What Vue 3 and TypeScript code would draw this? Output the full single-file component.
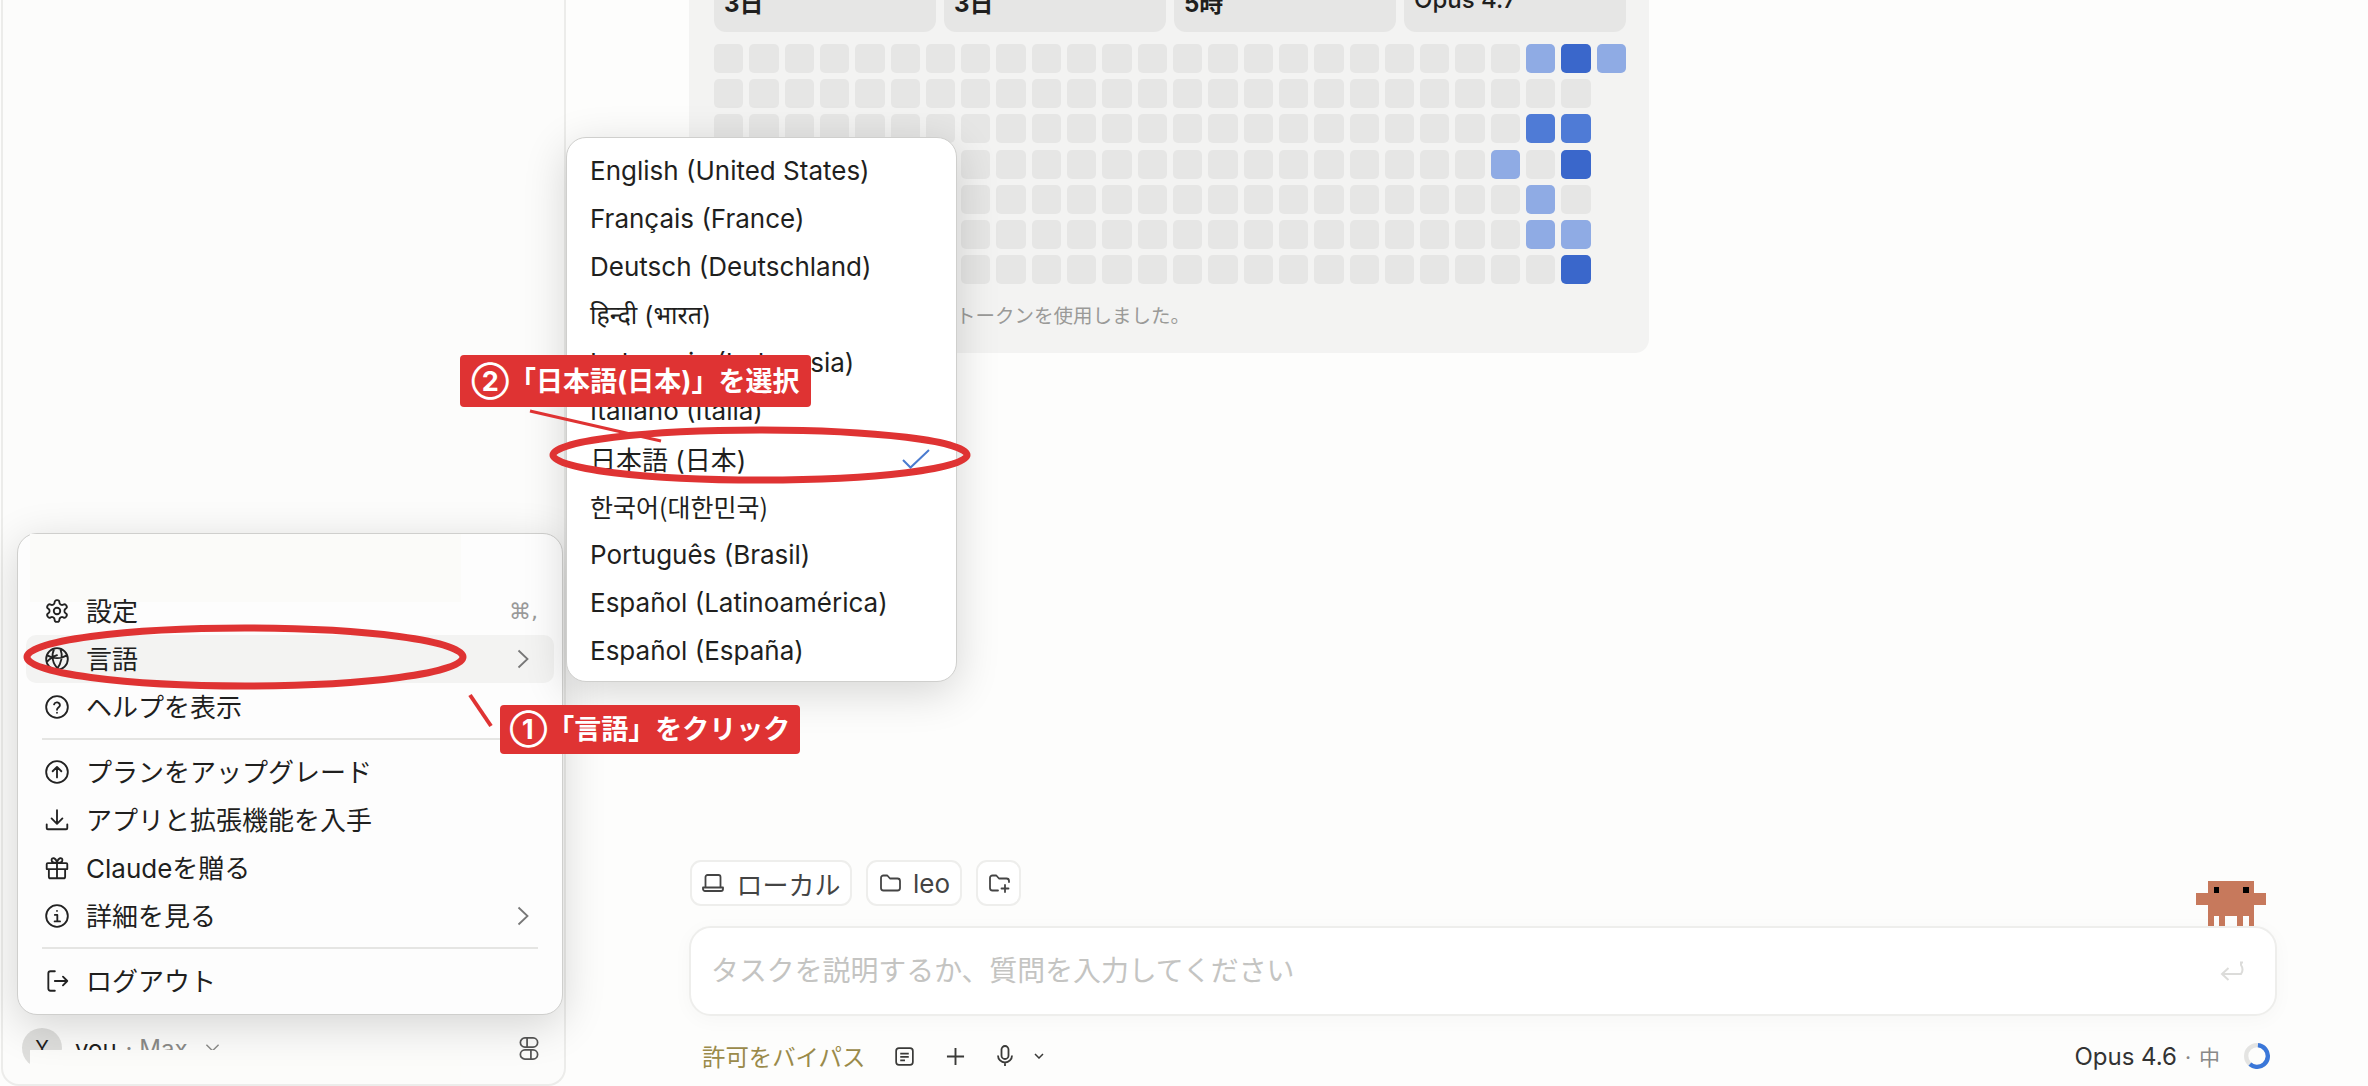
<template>
  <div class="app">
    <aside class="sidebar">
      <div class="user-row">
        <span class="avatar">Y</span>
        <span class="user-name">you</span>
        <span class="user-plan">· Max</span>
        <svg class="user-chevron" viewBox="0 0 16 10"><path d="M1.5 1.5 8 8l6.5-6.5" /></svg>
        <svg class="layout-icon" viewBox="0 0 20 24">
          <rect x="1" y="1" width="18" height="9.5" rx="4.7" />
          <rect x="1" y="13.5" width="18" height="9.5" rx="4.7" />
          <path d="M8 1v9.5M12 13.5V23" />
        </svg>
      </div>
    </aside>

    <main class="content">
      <section class="stats-card">
        <div class="tiles">
          <div v-for="tile in tiles" :key="tile.id" class="tile" :class="{ 'tile-model': tile.model }">{{ tile.label }}</div>
        </div>
        <div class="heatmap">
          <div v-for="(cell, i) in cells" :key="i" class="cell" :class="cell"></div>
        </div>
        <p class="note">トークンを使用しました。</p>
      </section>

      <section class="composer">
        <svg class="mascot" viewBox="0 0 12 8" shape-rendering="crispEdges">
          <path fill="#c7795c" d="M2 0h8v2h2v2h-2v4H9V6H8v2H7V6H5v2H4V6H3v2H2V4H0V2h2z" />
          <path fill="#000" d="M3 1h1v1H3zM8 1h1v1H8z" />
        </svg>
        <div class="chips">
          <div class="chip chip-local">
            <svg class="chip-icon" viewBox="0 0 24 24"><path d="M4.5 16V6a2 2 0 0 1 2-2h11a2 2 0 0 1 2 2v10M2 16.5h20V18a2 2 0 0 1-2 2H4a2 2 0 0 1-2-2z" /></svg>
            <span>ローカル</span>
          </div>
          <div class="chip chip-folder">
            <svg class="chip-icon" viewBox="0 0 24 24"><path d="M3 7a2.5 2.5 0 0 1 2.5-2.5h3.8l2.7 3h7.5A2.5 2.5 0 0 1 22 10v7a2.5 2.5 0 0 1-2.5 2.5h-14A2.5 2.5 0 0 1 3 17z" /></svg>
            <span>leo</span>
          </div>
          <div class="chip chip-add">
            <svg class="chip-icon" viewBox="0 0 24 24"><path d="M11 19.5H5.5A2.5 2.5 0 0 1 3 17V7a2.5 2.5 0 0 1 2.5-2.5h3.8l2.7 3h7.5A2.5 2.5 0 0 1 22 10v1M18 14v7M14.5 17.500h7" /></svg>
          </div>
        </div>
        <div class="prompt">
          <span class="placeholder">タスクを説明するか、質問を入力してください</span>
          <svg class="enter-icon" viewBox="0 0 24 20"><path d="M23 1.500h-2v2.500a8 8 0 0 1 0 9H2M8.500 7 2 13l6.500 6" /></svg>
        </div>
        <div class="toolbar">
          <span class="bypass">許可をバイパス</span>
          <svg class="tool-doc" viewBox="0 0 20 20"><rect x="1.200" y="1.200" width="17.600" height="17.600" rx="3" /><path d="M5.500 7h9M5.500 10.500h9M5.500 14h5" /></svg>
          <svg class="tool-plus" viewBox="0 0 20 20"><path d="M10 1v18M1 10h18" /></svg>
          <svg class="tool-mic" viewBox="0 0 16 22"><rect x="4.500" y="1" width="7" height="13" rx="3.500" /><path d="M1 10.500a7 7 0 0 0 14 0M8 17.500V21" /></svg>
          <svg class="tool-chevron" viewBox="0 0 10 6"><path d="M1 1l4 4 4-4" /></svg>
          <span class="model">Opus 4.6</span>
          <span class="effort"><span class="effort-dot">·</span>中</span>
          <svg class="ring" viewBox="0 0 24 24">
            <circle cx="12" cy="12" r="10" class="ring-track" />
            <circle cx="12" cy="12" r="10" class="ring-value" pathLength="100" stroke-dasharray="60 100" transform="rotate(-85 12 12)" />
          </svg>
        </div>
      </section>
    </main>

    <!-- 上のパッチとポップアップ -->
    <div class="patch-top"></div>
    <div class="patch-bottom"></div>

    <div class="account-menu">
      <div class="menu-patch"></div>
      <template v-for="item in menuItems" :key="item.label">
        <div class="menu-row" :class="{ active: item.active }">
          <svg class="menu-icon" viewBox="0 0 24 24"><path :d="item.icon" /></svg>
          <span class="menu-label">{{ item.label }}</span>
          <span v-if="item.shortcut" class="shortcut">{{ item.shortcut }}</span>
          <svg v-if="item.sub" class="menu-chevron" viewBox="0 0 12 20"><path d="M1.500 1.500 10.500 10l-9 8.500" /></svg>
        </div>
        <hr v-if="item.divider" class="menu-divider" />
      </template>
    </div>

    <div class="lang-menu">
      <div v-for="lang in languages" :key="lang.name" class="lang-row" :class="lang.cls">
        <span>{{ lang.name }}</span>
        <svg v-if="lang.selected" class="check" viewBox="0 0 28 20"><path d="M1 11l7.500 7.500L27 1" /></svg>
      </div>
    </div>

    <svg class="marks" viewBox="0 0 2368 1086">
      <ellipse cx="245" cy="657" rx="218" ry="29" />
      <ellipse cx="760" cy="455" rx="207" ry="25" />
      <path d="M470 695l21 31" stroke-width="4" />
      <path d="M530 411l131 30" stroke-width="3" />
    </svg>
    <div class="callout callout-one">①「言語」をクリック</div>
    <div class="callout callout-two">②「日本語(日本)」を選択</div>
  </div>
</template>

<script setup lang="ts">
interface MenuItem {
  label: string;
  icon: string;
  shortcut?: string;
  sub?: boolean;
  active?: boolean;
  divider?: boolean;
}

const tiles = [
  { id: 1, label: '3日', model: false },
  { id: 2, label: '3日', model: false },
  { id: 3, label: '5時', model: false },
  { id: 4, label: 'Opus 4.7', model: true },
];

// 行ごとの色付きセル [行, 列, 濃さ]
const marked: [number, number, string][] = [
  [0, 23, 'light'],
  [0, 24, 'dark'],
  [0, 25, 'light'],
  [2, 23, 'mid'],
  [2, 24, 'mid'],
  [3, 22, 'light'],
  [3, 24, 'dark'],
  [4, 23, 'light'],
  [5, 23, 'light'],
  [5, 24, 'light'],
  [6, 24, 'dark'],
];

const cells: string[] = [];
for (let row = 0; row < 7; row++) {
  for (let col = 0; col < 26; col++) {
    const hit = marked.find((m) => m[0] === row && m[1] === col);
    if (hit) cells.push(hit[2]);
    else cells.push(col === 25 ? 'none' : 'empty');
  }
}

const circle = 'M22 12a10 10 0 1 1-20 0 10 10 0 0 1 20 0z';

const menuItems: MenuItem[] = [
  {
    label: '設定',
    shortcut: '⌘,',
    icon: 'M12.220 2h-.440a2 2 0 0 0-2 2v.180a2 2 0 0 1-1 1.730l-.430.250a2 2 0 0 1-2 0l-.150-.080a2 2 0 0 0-2.730.730l-.220.380a2 2 0 0 0 .730 2.730l.150.100a2 2 0 0 1 1 1.720v.510a2 2 0 0 1-1 1.740l-.150.090a2 2 0 0 0-.730 2.730l.220.380a2 2 0 0 0 2.730.730l.150-.080a2 2 0 0 1 2 0l.430.250a2 2 0 0 1 1 1.730V20a2 2 0 0 0 2 2h.440a2 2 0 0 0 2-2v-.180a2 2 0 0 1 1-1.730l.430-.250a2 2 0 0 1 2 0l.150.080a2 2 0 0 0 2.730-.730l.220-.390a2 2 0 0 0-.730-2.730l-.150-.080a2 2 0 0 1-1-1.740v-.500a2 2 0 0 1 1-1.740l.150-.090a2 2 0 0 0 .730-2.730l-.220-.380a2 2 0 0 0-2.730-.730l-.150.080a2 2 0 0 1-2 0l-.430-.250a2 2 0 0 1-1-1.730V4a2 2 0 0 0-2-2zM15 12a3 3 0 1 1-6 0 3 3 0 0 1 6 0z',
  },
  {
    label: '言語',
    sub: true,
    active: true,
    icon: circle + 'M3 8.500c5 3.500 13 3.500 18 0M2.500 15c2.500-3 5-5 9.500-6.500M9.500 2.500c-3 6-2 14 4 19M15 2.500c2.500 6 1.500 13-3.500 19.500',
  },
  {
    label: 'ヘルプを表示',
    icon: circle + 'M9.300 9.500a2.800 2.800 0 0 1 5.400.9c0 1.900-2.700 2.300-2.700 4.100M12 17.300v.1',
    divider: true,
  },
  {
    label: 'プランをアップグレード',
    icon: circle + 'M12 17V7.500M8 11.300 12 7.300l4 4',
  },
  {
    label: 'アプリと拡張機能を入手',
    icon: 'M12 3v12M7 10.500l5 5 5-5M2.500 16v3.500a1 1 0 0 0 1 1h17a1 1 0 0 0 1-1V16',
  },
  {
    label: 'Claudeを贈る',
    icon: 'M2.500 8.500a1 1 0 0 1 1-1h17a1 1 0 0 1 1 1V13h-19zM4.500 13v7a1.500 1.500 0 0 0 1.500 1.500h12a1.500 1.500 0 0 0 1.500-1.500v-7M12 7.500v14M12 7.500C9 7.500 7 6.500 7 4.700c0-2.500 4-3 5 2.800 1-5.800 5-5.300 5-2.800 0 1.800-2 2.800-5 2.800z',
  },
  {
    label: '詳細を見る',
    sub: true,
    divider: true,
    icon: circle + 'M10 11h2.300v6M9.800 17h5M12 7.200v.1',
  },
  {
    label: 'ログアウト',
    icon: 'M10 3H6a2 2 0 0 0-2 2v14a2 2 0 0 0 2 2h4M10 12h11.500M17.500 8l4 4-4 4',
  },
];

const languages = [
  { name: 'English (United States)' },
  { name: 'Français (France)' },
  { name: 'Deutsch (Deutschland)' },
  { name: 'हिन्दी (भारत)', cls: 'hi' },
  { name: 'Indonesia (Indonesia)' },
  { name: 'Italiano (Italia)' },
  { name: '日本語 (日本)', selected: true },
  { name: '한국어(대한민국)', cls: 'ko' },
  { name: 'Português (Brasil)' },
  { name: 'Español (Latinoamérica)' },
  { name: 'Español (España)' },
];
</script>

<style>
html,
body {
  margin: 0;
  background: #fdfdfc;
}
</style>

<style scoped>
.app {
  position: relative;
  display: flex;
  width: 2368px;
  height: 1086px;
  overflow: hidden;
  background: #fdfdfc;
  color: #1f1f1e;
  font-family: Inter, 'Noto Sans CJK JP', 'Noto Sans', sans-serif;
}

.sidebar {
  flex: 0 0 auto;
  display: flex;
  flex-direction: column;
  justify-content: flex-end;
  box-sizing: border-box;
  width: 565px;
  margin-left: 1px;
  border: 2px solid #ececea;
  border-top: none;
  border-radius: 0 0 18px 18px;
  background: #fcfcfb;
}

.user-row {
  display: flex;
  align-items: center;
  height: 40px;
  margin-bottom: 16px;
  padding: 0 25px 0 19px;
  font-size: 24px;
}

.avatar {
  display: flex;
  align-items: center;
  justify-content: center;
  width: 40px;
  height: 40px;
  margin-right: 13px;
  border-radius: 50%;
  background: #dededc;
  font-size: 20px;
}

.user-name {
  margin-right: 9px;
}

.user-plan {
  color: #8a8a88;
}

.user-chevron {
  width: 15px;
  height: 10px;
  margin-left: 17px;
  fill: none;
  stroke: #8a8a88;
  stroke-width: 1.500;
}

.layout-icon {
  width: 20px;
  height: 23px;
  margin-left: auto;
  fill: none;
  stroke: #555;
  stroke-width: 1.800;
}

.content {
  flex: 1;
  display: flex;
  flex-direction: column;
  justify-content: space-between;
  padding-left: 123px;
}

.stats-card {
  box-sizing: border-box;
  width: 960px;
  margin-top: -42px;
  padding: 14px 23px 24px 25px;
  border-radius: 14px;
  background: #f3f3f2;
}

.tiles {
  display: grid;
  grid-template-columns: repeat(4, 1fr);
  gap: 8px;
}

.tile {
  box-sizing: border-box;
  height: 60px;
  padding: 17px 0 0 10px;
  border-radius: 12px;
  background: #e6e6e5;
  overflow: hidden;
  font-size: 24px;
  font-weight: 700;
  line-height: 30px;
}

.tile-model {
  padding-top: 13px;
  font-size: 24px;
  font-weight: 500;
}

.heatmap {
  display: grid;
  grid-template-columns: repeat(26, 1fr);
  grid-auto-rows: 29px;
  gap: 6.200px 6px;
  margin-top: 12px;
}

.cell {
  border-radius: 5px;
}

.empty {
  background: #e6e6e5;
}

.light {
  background: #8fabe4;
}

.mid {
  background: #4f7bd6;
}

.dark {
  background: #3a67cb;
}

.note {
  margin: 19px 0 0 242px;
  color: #9a9a98;
  font-size: 19.500px;
  line-height: 26px;
}

.composer {
  position: relative;
  width: 1588px;
  padding-bottom: 10px;
}

.mascot {
  position: absolute;
  top: 21px;
  right: 11px;
  width: 70px;
  height: 47px;
}

.chips {
  display: flex;
  gap: 14px;
  margin: 0 0 20px 1px;
}

.chip {
  display: flex;
  align-items: center;
  justify-content: center;
  box-sizing: border-box;
  height: 46px;
  border: 2px solid #eeeeec;
  border-radius: 11px;
  background: #fff;
  color: #444;
  font-size: 26px;
  gap: 11px;
}

.chip-local {
  width: 162px;
}

.chip-folder {
  width: 96px;
}

.chip-add {
  width: 45px;
}

.chip-icon {
  width: 24px;
  height: 24px;
  fill: none;
  stroke: #444;
  stroke-width: 1.800;
  stroke-linejoin: round;
  stroke-linecap: round;
}

.prompt {
  position: relative;
  display: flex;
  align-items: center;
  justify-content: space-between;
  box-sizing: border-box;
  height: 90px;
  padding: 0 31px 0 20px;
  border: 2px solid #eeeeec;
  border-radius: 22px;
  background: #fff;
  box-shadow: 0 4px 20px rgba(0, 0, 0, 0.03);
}

.placeholder {
  color: #c4c4c2;
  font-size: 27.900px;
  line-height: 34px;
}

.enter-icon {
  width: 24px;
  height: 20px;
  fill: none;
  stroke: #dcdcda;
  stroke-width: 2;
}

.toolbar {
  display: flex;
  align-items: center;
  height: 40px;
  margin-top: 20px;
  padding: 0 7px 0 13px;
}

.bypass {
  margin-right: 30px;
  color: #9a8a4a;
  font-size: 23.400px;
}

.toolbar svg {
  fill: none;
  stroke: #3a3a38;
  flex: 0 0 auto;
}

.tool-doc {
  width: 19px;
  height: 19px;
  stroke-width: 1.800;
}

.tool-plus {
  width: 19px;
  height: 19px;
  margin-left: 32px;
  stroke-width: 2;
}

.tool-mic {
  width: 16px;
  height: 22px;
  margin-left: 32px;
  stroke-width: 1.800;
}

.tool-chevron {
  width: 10px;
  height: 6px;
  margin-left: 21px;
  stroke-width: 1.500;
}

.model {
  margin-left: auto;
  color: #333;
  font-size: 24px;
}

.effort {
  margin-left: 8px;
  color: #888;
  font-size: 21px;
}

.effort-dot {
  margin-right: 8px;
}

.toolbar .ring {
  width: 26px;
  height: 26px;
  margin-left: 24px;
  stroke-width: 4;
}

.toolbar .ring-track {
  stroke: #e4e4e2;
}

.toolbar .ring-value {
  stroke: #3a77d9;
}

.patch-top {
  position: absolute;
  top: 0;
  left: 14px;
  width: 447px;
  height: 533px;
  background: #fcfcfb;
}

.patch-bottom {
  position: absolute;
  top: 1050px;
  left: 30px;
  width: 431px;
  height: 33px;
  background: #fcfcfa;
}

.account-menu {
  position: absolute;
  top: 533px;
  left: 17px;
  box-sizing: border-box;
  width: 546px;
  height: 482px;
  padding: 53px 8px 9px;
  border: 1px solid #cfcfcd;
  border-radius: 20px;
  background: #fdfdfd;
  box-shadow: 0 10px 44px rgba(0, 0, 0, 0.16);
}

.menu-patch {
  position: absolute;
  top: 0;
  left: 12px;
  width: 431px;
  height: 68px;
  background: #fbfbf9;
}

.menu-row {
  position: relative;
  display: flex;
  align-items: center;
  box-sizing: border-box;
  height: 48px;
  padding: 0 16px 0 18px;
  border-radius: 10px;
  font-size: 26px;
}

.menu-row.active {
  background: #f3f3f2;
}

.menu-label {
  padding-bottom: 3px;
}

.menu-icon {
  width: 26px;
  height: 26px;
  margin-right: 16px;
  fill: none;
  stroke: #222;
  stroke-width: 1.700;
  stroke-linecap: round;
  stroke-linejoin: round;
}

.shortcut {
  margin-left: auto;
  color: #999;
  font-family: 'DejaVu Sans', sans-serif;
  font-size: 22px;
}

.menu-chevron {
  width: 12px;
  height: 20px;
  margin-left: auto;
  margin-right: 9px;
  fill: none;
  stroke: #777;
  stroke-width: 1.800;
}

.menu-divider {
  height: 2px;
  margin: 7px 16px 8px;
  border: none;
  background: #e5e5e3;
}

.lang-menu {
  position: absolute;
  top: 137px;
  left: 566px;
  box-sizing: border-box;
  width: 391px;
  height: 545px;
  padding: 8px 0;
  border: 1px solid #cfcfcd;
  border-radius: 20px;
  background: #fff;
  box-shadow: 0 10px 44px rgba(0, 0, 0, 0.16);
}

.lang-row {
  display: flex;
  align-items: center;
  justify-content: space-between;
  box-sizing: border-box;
  height: 48px;
  padding: 0 26px 0 23px;
  font-size: 26px;
}

.hi,
.ko {
  font-size: 25px;
}

.ko {
  font-family: 'Noto Sans CJK KR', sans-serif;
}

.check {
  width: 28px;
  height: 20px;
  margin-top: 2px;
  fill: none;
  stroke: #4a7bd0;
  stroke-width: 2;
}

.marks {
  position: absolute;
  top: 0;
  left: 0;
  width: 2368px;
  height: 1086px;
  pointer-events: none;
  fill: none;
  stroke: #df3333;
  stroke-width: 7;
}

.callout {
  position: absolute;
  display: flex;
  align-items: center;
  justify-content: center;
  box-sizing: border-box;
  padding-bottom: 4px;
  border-radius: 4px;
  background: #df3333;
  color: #fff;
  font-size: 27px;
  font-weight: 700;
  white-space: nowrap;
}

.callout-one {
  top: 705px;
  left: 500px;
  width: 300px;
  height: 49px;
}

.callout-two {
  top: 355px;
  left: 460px;
  width: 351px;
  height: 52px;
}
</style>
